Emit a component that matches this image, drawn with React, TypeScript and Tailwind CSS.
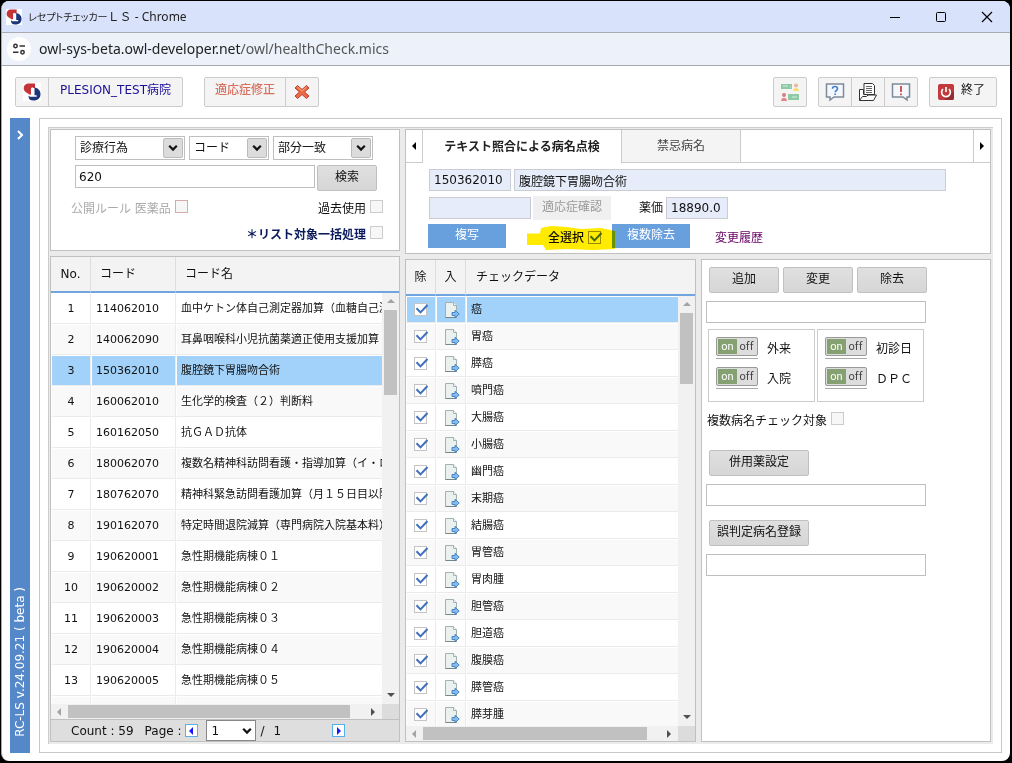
import type { ReactNode } from 'react';

type CodeRow = { no: number; code: string; name: string };

const codeRows: CodeRow[] = [
  { no: 1, code: '114062010', name: '血中ケトン体自己測定器加算（血糖自己測定器加算）' },
  { no: 2, code: '140062090', name: '耳鼻咽喉科小児抗菌薬適正使用支援加算' },
  { no: 3, code: '150362010', name: '腹腔鏡下胃腸吻合術' },
  { no: 4, code: '160062010', name: '生化学的検査（２）判断料' },
  { no: 5, code: '160162050', name: '抗ＧＡＤ抗体' },
  { no: 6, code: '180062070', name: '複数名精神科訪問看護・指導加算（イ・ロ以外）' },
  { no: 7, code: '180762070', name: '精神科緊急訪問看護加算（月１５日目以降）' },
  { no: 8, code: '190162070', name: '特定時間退院減算（専門病院入院基本料）' },
  { no: 9, code: '190620001', name: '急性期機能病棟０１' },
  { no: 10, code: '190620002', name: '急性期機能病棟０２' },
  { no: 11, code: '190620003', name: '急性期機能病棟０３' },
  { no: 12, code: '190620004', name: '急性期機能病棟０４' },
  { no: 13, code: '190620005', name: '急性期機能病棟０５' },
  { no: 14, code: '190620006', name: '急性期機能病棟０６' },
];

const diseases = [
  '癌', '胃癌', '膵癌', '噴門癌', '大腸癌', '小腸癌', '幽門癌', '末期癌',
  '結腸癌', '胃管癌', '胃肉腫', '胆管癌', '胆道癌', '腹膜癌', '膵管癌', '膵芽腫',
];

function Logo({ className }: { className: string }) {
  return (
    <svg className={className} viewBox="0 0 18 18" aria-hidden="true">
      <rect width="18" height="18" fill="#fff" />
      <path d="M4.500.5H12V5H8v6.500H6C5.500 10 1 9.500.7 5.500.600 3 2.200 1 4.500.5z" fill="#c43338" />
      <path d="M11.500 4.500c3.500.5 6 3 6 6.500 0 4-2.500 6.500-7 6.500-3.500 0-5-1.500-5-4.500h6z" fill="#1c3578" />
      <path d="M8.600 4.500h1.600v7.800h3.500v1.500H6.500v-1.300h2.100z" fill="#fff" />
    </svg>
  );
}

function Arrow({ dir, color }: { dir: 'up' | 'down' | 'left' | 'right'; color: string }) {
  const paths = { up: 'M1 6l4-4 4 4z', down: 'M1 3l4 4 4-4z', left: 'M7 1L3 5l4 4z', right: 'M3 1l4 4-4 4z' };
  return (
    <svg className="h-[10px] w-[10px] shrink-0" viewBox="0 0 10 10" aria-hidden="true">
      <path d={paths[dir]} fill={color} />
    </svg>
  );
}

function Chevron() {
  return (
    <svg className="h-2 w-[10px]" viewBox="0 0 10 8" aria-hidden="true">
      <path d="M1.200 1.800L5 5.600l3.800-3.800" fill="none" stroke="#111" strokeWidth="2.200" />
    </svg>
  );
}

function SearchSelect({ label, value, width }: { label: string; value: string; width: string }) {
  return (
    <span className={`relative ${width}`}>
      <select aria-label={label} className="h-6 w-full appearance-none border border-[#bfbfbf] bg-white pl-1 text-xs">
        <option>{value}</option>
      </select>
      <span className="pointer-events-none absolute top-[2px] right-[2px] flex h-5 w-5 items-center justify-center rounded-xs border border-[#bbb] bg-[#dcdcdc]">
        <Chevron />
      </span>
    </span>
  );
}

function GrayButton({ children, width }: { children: ReactNode; width: string }) {
  return (
    <button className={`h-[26px] rounded-xs border border-[#c0c0c0] bg-linear-to-b from-[#e0e0e0] to-[#d6d6d6] pb-[2px] text-xs ${width}`}>
      {children}
    </button>
  );
}

function EmptyCheck({ id, border = 'border-[#ccc]' }: { id: string; border?: string }) {
  return <input id={id} type="checkbox" className={`h-[13px] w-[13px] appearance-none border bg-[#f7f7f7] ${border}`} />;
}

function Check({ id, label, color = '#3f6fbd', box = 'border-[#c4c4c4] bg-white' }: { id?: string; label?: string; color?: string; box?: string }) {
  return (
    <span className="grid h-[13px] w-[13px]">
      <input id={id} aria-label={label} type="checkbox" defaultChecked className={`col-start-1 row-start-1 h-[13px] w-[13px] appearance-none border ${box}`} />
      <svg className="pointer-events-none col-start-1 row-start-1 h-[13px] w-[14px]" viewBox="0 0 14 13" aria-hidden="true">
        <path d="M2.500 5.200l4 4.200L13.500 2" fill="none" stroke={color} strokeWidth="2" />
      </svg>
    </span>
  );
}

function Toggle({ label }: { label: string }) {
  return (
    <label className="flex h-[30px] items-start gap-[9px]">
      <input type="checkbox" className="sr-only" defaultChecked />
      <span className="flex h-[22px] w-[42px] shrink-0 border-b border-[#aaa]">
        <span className="flex h-[19px] w-full rounded-xs border border-[#999] bg-[#ddd] p-px font-['Roboto',sans-serif] text-[11px] leading-[15px]">
          <span className="w-[19px] bg-[#86a171] text-center text-white">on</span>
          <span className="flex-1 text-center text-[#444]">off</span>
        </span>
      </span>
      <span className="pt-[3px] leading-[18px]">{label}</span>
    </label>
  );
}

function ExportDoc() {
  return (
    <svg className="h-4 w-4" viewBox="0 0 16 16" aria-hidden="true">
      <path d="M1.500.5h8l3 3v12h-11z" fill="#eaf1ef" stroke="#9fb1b0" />
      <path d="M1.500 15.500h11" stroke="#71878a" />
      <path d="M9.500.5v3h3" fill="#fff" stroke="#9fb1b0" />
      <path d="M8 10.500h3V8.300l4.200 3.700L11 15.700v-2.200H8z" fill="#86bdf0" stroke="#3d7cc0" strokeWidth=".9" />
    </svg>
  );
}

function VScroll({ thumb }: { thumb: string }) {
  return (
    <div className="flex w-[17px] shrink-0 flex-col items-center bg-[#f1f1f1] pt-1 pb-1">
      <Arrow dir="up" color="#a3a3a3" />
      <div className={`mt-[3px] w-[13px] bg-[#c1c1c1] ${thumb}`} />
      <div className="flex-1" />
      <Arrow dir="down" color="#505050" />
    </div>
  );
}

function HScroll({ thumb }: { thumb: string }) {
  return (
    <div className="flex h-[15px] shrink-0 items-center bg-[#f1f1f1] pl-[3px]">
      <Arrow dir="left" color="#a3a3a3" />
      <div className={`ml-[4px] h-[13px] bg-[#c1c1c1] ${thumb}`} />
      <div className="flex-1" />
      <Arrow dir="right" color="#505050" />
      <div className="ml-1 h-full w-[17px] bg-[#dcdcdc]" />
    </div>
  );
}

function TitleBar() {
  return (
    <header className="shrink-0 font-['Noto_Sans','Noto_Sans_CJK_JP',sans-serif]">
      <div className="flex h-8 items-center border-b border-[#a9abb0] bg-[#d8e2fb] pl-1 text-[#222]">
        <Logo className="h-4 w-4" />
        <h1 className="ml-[6px] flex-1 text-xs">
          <span className="text-[10px] [font-feature-settings:'palt']">レセプトチェッカー</span>ＬＳ - Chrome
        </h1>
        <button aria-label="最小化" className="flex w-[46px] justify-center">
          <svg className="h-3 w-3" viewBox="0 0 12 12"><path d="M1 6.500h10" stroke="#000" /></svg>
        </button>
        <button aria-label="最大化" className="flex w-[46px] justify-center">
          <svg className="h-3 w-3" viewBox="0 0 12 12"><rect x="1.500" y="1.500" width="9" height="9" rx="1" fill="none" stroke="#000" /></svg>
        </button>
        <button aria-label="閉じる" className="flex w-[46px] justify-center">
          <svg className="h-3 w-3" viewBox="0 0 12 12"><path d="M1 1l10 10M11 1L1 11" stroke="#000" strokeWidth="1.200" /></svg>
        </button>
      </div>
      <div className="flex h-[33px] items-center border-b border-[#a9abb0] bg-[#edf1fa] pl-[5px]">
        <span className="flex h-6 w-6 items-center justify-center rounded-full bg-white">
          <svg className="h-3 w-3" viewBox="0 0 12 12" fill="none" stroke="#333" strokeWidth="1.500">
            <circle cx="2.500" cy="3" r="1.700" />
            <path d="M6.500 3H12M0 9.200h5.500" />
            <circle cx="9.500" cy="9.200" r="1.700" />
          </svg>
        </span>
        <span className="ml-2 text-sm text-[#555]">
          <span className="text-[#222]">owl-sys-beta.owl-developer.net</span>/owl/healthCheck.mics
        </span>
      </div>
    </header>
  );
}

function Toolbar() {
  const group = 'flex h-[30px] rounded-xs border border-[#ccc] bg-[#f4f4f4]';
  return (
    <nav className="flex shrink-0 px-[13px] pt-[11px] pb-[11px]">
      <div className={group}>
        <button aria-label="ホーム" className="flex w-[33px] items-center justify-center border-r border-[#ccc]">
          <Logo className="h-[18px] w-[18px]" />
        </button>
        <button className="w-[133px] pb-1 text-[#1a0f99]">PLESION_TEST病院</button>
      </div>
      <div className={`ml-[21px] ${group}`}>
        <button className="w-[81px] border-r border-[#ccc] pb-1 font-medium text-[#d9705f]">適応症修正</button>
        <button aria-label="取消" className="flex w-8 items-center justify-center">
          <svg className="h-4 w-4" viewBox="0 0 16 16">
            <path d="M3.500 1.500L8 5.500l4.500-4 2.500 2.500L10.500 8l4.500 4-2.500 2.500-4.500-4-4.500 4L1 12l4.500-4L1 4z" fill="#ec6a45" stroke="#b9402a" />
            <path d="M3.500 3L8 7l4.500-4" fill="none" stroke="#f7a88a" />
          </svg>
        </button>
      </div>
      <div className="flex-1" />
      <div className={group}>
        <button aria-label="チャット" className="flex w-8 items-center justify-center">
          <svg className="h-5 w-5" viewBox="0 0 20 20">
            <path d="M1 2h11v5H1zM8 12h11v6H8z" fill="#8fcaa7" />
            <path d="M3 4h5M10 5h1M12 15h5" stroke="#d6ecdd" />
            <circle cx="16" cy="3.500" r="2" fill="#edb79c" />
            <path d="M13 9c0-4 6-4 6 0z" fill="#f3df74" />
            <circle cx="4" cy="13" r="2" fill="#cf8080" />
            <path d="M1 19c0-4.500 6-4.500 6 0z" fill="#e5868a" />
          </svg>
        </button>
      </div>
      <div className={`ml-[11px] ${group}`}>
        <button aria-label="ヘルプ" className="flex w-[33px] items-center justify-center border-r border-[#ccc]">
          <svg className="h-5 w-5" viewBox="0 0 20 20">
            <path d="M1.500 2h17v13H9l-4 3v-3H1.500z" fill="#f4f8fc" stroke="#7e8a98" strokeWidth="1.500" />
            <path d="M7.500 6.800c0-3 5-3 5 0 0 1.700-2.300 1.700-2.300 3.400M10.200 11.500v1.600" fill="none" stroke="#3d7fd0" strokeWidth="1.600" />
          </svg>
        </button>
        <button aria-label="ファイル" className="flex w-[33px] items-center justify-center border-r border-[#ccc]">
          <svg className="h-5 w-5" viewBox="0 0 20 20" fill="#fff" stroke="#333">
            <path d="M1.500 18.500v-11h4v5" />
            <path d="M6 12.500v-11h8.500l2 2v9z" />
            <path d="M8 4.500h6M8 6.500h6M8 8.500h6M8 10.500h6" stroke="#666" />
            <path d="M1.500 18.500l3-4h4l1.500-1.500h8.500l-3 5.500z" />
          </svg>
        </button>
        <button aria-label="お知らせ" className="flex w-8 items-center justify-center">
          <svg className="h-5 w-5" viewBox="0 0 20 20">
            <path d="M1.500 2h17v13H16v3l-4-3H1.500z" fill="#f4f8fc" stroke="#7e8a98" strokeWidth="1.500" />
            <path d="M10 4v6M10 11.500v1.800" stroke="#cf4540" strokeWidth="1.800" />
          </svg>
        </button>
      </div>
      <button className={`ml-[11px] w-[68px] items-center justify-center gap-[6px] pr-1 ${group}`}>
        <svg className="h-[18px] w-[18px]" viewBox="0 0 18 18" fill="none">
          <rect x="1" y="1" width="16" height="16" rx="2" fill="#c23a3b" />
          <path d="M12.500 5.500L17 10v5a2 2 0 0 1-2 2H9l-4-4z" fill="#942c30" />
          <circle cx="9" cy="9.300" r="5" fill="#c23a3b" />
          <path d="M6 6a4.400 4.400 0 1 0 6 0M9 4v5" stroke="#fff" strokeWidth="1.700" />
        </svg>
        <span className="pb-1">終了</span>
      </button>
    </nav>
  );
}

function SearchPanel() {
  return (
    <form className="h-[122px] shrink-0 border border-[#c0c0c0] bg-white pt-[6px] pr-4 pl-6" onSubmit={(e) => e.preventDefault()}>
      <div className="flex gap-1">
        <SearchSelect label="区分" value="診療行為" width="w-[110px]" />
        <SearchSelect label="検索項目" value="コード" width="w-[80px]" />
        <SearchSelect label="一致条件" value="部分一致" width="w-[100px]" />
      </div>
      <div className="mt-[5px] flex items-start gap-[2px]">
        <input aria-label="検索語" defaultValue="620" className="h-[23px] w-60 border border-[#bfbfbf] px-[3px]" />
        <GrayButton width="w-[60px]">検索</GrayButton>
      </div>
      <div className="mt-[9px] flex h-[18px] justify-between">
        <span className="-ml-1 flex gap-1 text-[#aaa]">
          <label htmlFor="open-rule" className="leading-[18px]">公開ルール 医薬品</label>
          <EmptyCheck id="open-rule" border="border-[#d8aaa8]" />
        </span>
        <span className="flex gap-1">
          <label htmlFor="past-use" className="leading-[18px]">過去使用</label>
          <EmptyCheck id="past-use" />
        </span>
      </div>
      <div className="mt-2 flex justify-end gap-1">
        <label htmlFor="bulk" className="leading-[18px] font-bold text-[#0b1a5c]">＊リスト対象一括処理</label>
        <EmptyCheck id="bulk" />
      </div>
    </form>
  );
}

function CodeGrid() {
  return (
    <section className="flex min-h-0 flex-1 flex-col border border-[#c0c0c0] bg-white">
      <div className="flex min-h-0 flex-1">
        <div className="relative min-w-0 flex-1 overflow-hidden">
          <table className="w-full table-fixed border-separate border-spacing-0">
            <thead>
              <tr className="h-9 bg-[#f3f3f3] text-left">
                <th className="w-10 border-r border-b-2 border-r-[#ddd] border-b-[#70a5e0] text-center font-normal">No.</th>
                <th className="w-[85px] border-r border-b-2 border-r-[#ddd] border-b-[#70a5e0] pl-[9px] font-normal">コード</th>
                <th className="border-b-2 border-b-[#70a5e0] pl-[9px] font-normal">コード名</th>
              </tr>
            </thead>
            <tbody className="text-[11px]">
              {codeRows.map((row, i) => {
                const bg = row.no === 3 ? 'bg-[#a2d2f9]' : i % 2 ? 'bg-[#f9f9f9]' : 'bg-white';
                const cell = `h-[31px] border-y border-l border-t-white border-r-[#ebebeb] border-b-[#ebebeb] border-l-white pt-[2px] pb-0 ${bg}`;
                return (
                  <tr key={row.no}>
                    <td className={`${cell} border-r text-center`}>{row.no}</td>
                    <td className={`${cell} border-r pl-1`}>{row.code}</td>
                    <td className={`${cell} overflow-hidden pl-1 whitespace-nowrap`}>{row.name}</td>
                  </tr>
                );
              })}
            </tbody>
          </table>
        </div>
        <div className="flex w-[17px] shrink-0 flex-col">
          <div className="h-9 shrink-0 border-b-2 border-[#70a5e0] bg-[#f3f3f3]" />
          <div className="flex min-h-0 flex-1">
            <VScroll thumb="h-[85px]" />
          </div>
        </div>
      </div>
      <HScroll thumb="w-[282px]" />
      <div className="flex h-[22px] shrink-0 items-center border-t border-[#c0c0c0] bg-[#dedede] pl-5">
        <span>Count : 59</span>
        <span className="ml-[11px]">Page :</span>
        <button aria-label="前のページ" className="ml-[3px] flex h-[13px] w-[13px] items-center justify-center border border-[#58b0e8] bg-white">
          <Arrow dir="left" color="#1a1aff" />
        </button>
        <span className="relative ml-2 w-[50px]">
          <select aria-label="ページ" className="h-[21px] w-full appearance-none border border-[#888] bg-white pl-[5px]">
            <option>1</option>
          </select>
          <span className="pointer-events-none absolute top-[7px] right-1">
            <Chevron />
          </span>
        </span>
        <span className="ml-[5px]">/</span>
        <span className="ml-[9px]">1</span>
        <button aria-label="次のページ" className="ml-[51px] flex h-[13px] w-[13px] items-center justify-center border border-[#58b0e8] bg-white">
          <Arrow dir="right" color="#1a1aff" />
        </button>
      </div>
    </section>
  );
}

function DetailPanel() {
  const field = 'h-[22px] border border-[#c9ccd3] bg-[#e6ecf9] px-1 text-xs';
  const blue = 'h-6 w-[78px] bg-[#68a0de] pb-[3px] text-white';
  return (
    <section className="h-[125px] shrink-0 border border-[#c0c0c0] bg-white">
      <div className="flex h-[33px]" role="tablist">
        <button aria-label="前のタブ" className="flex w-[17px] items-center justify-center border-r border-b border-[#ccc]">
          <Arrow dir="left" color="#000" />
        </button>
        <button role="tab" aria-selected="true" className="w-[198px] font-bold text-[#222]">テキスト照合による病名点検</button>
        <button role="tab" aria-selected="false" className="w-[120px] border-x border-b border-[#ccc] bg-[#f4f4f4] text-[#444]">禁忌病名</button>
        <div className="flex-1 border-b border-[#ccc]" />
        <button aria-label="次のタブ" className="flex w-[17px] items-center justify-center border-b border-l border-[#ccc]">
          <Arrow dir="right" color="#000" />
        </button>
      </div>
      <div className="mt-[6px] flex gap-[3px] pr-11 pl-[23px]">
        <input aria-label="コード" readOnly defaultValue="150362010" className={`w-[82px] shrink-0 ${field}`} />
        <input aria-label="コード名" readOnly defaultValue="腹腔鏡下胃腸吻合術" className={`min-w-0 flex-1 ${field}`} />
      </div>
      <div className="mt-[5px] flex items-center pl-[23px]">
        <input aria-label="適応症" readOnly className={`w-[102px] ${field}`} />
        <button disabled className="ml-[2px] h-6 w-[78px] bg-[#f0f0f0] pb-[2px] text-[#999]">適応症確認</button>
        <label htmlFor="price" className="ml-7">薬価</label>
        <input id="price" readOnly defaultValue="18890.0" className={`ml-[3px] w-[62px] ${field}`} />
      </div>
      <div className="mt-1 flex items-center pl-[22px]">
        <button className={blue}>複写</button>
        <div className="relative flex w-[106px] items-center gap-1 pt-[3px] pl-[42px]">
          <label htmlFor="all" className="font-medium">全選択</label>
          <Check id="all" color="#4472b8" box="border-[#999] bg-white" />
          <svg className="pointer-events-none absolute -top-[2px] left-[21px] h-[26px] w-[88px] mix-blend-multiply" viewBox="0 0 88 26" aria-hidden="true">
            <path d="M0 8.500h13L14 3 24 1l16 1 14 2 20-1 14 3v18l-22 1-26-1-21 1-3-5H0z" fill="#ffea00" />
          </svg>
        </div>
        <button className={blue}>複数除去</button>
        <a href="#history" className="ml-[25px] pt-[3px] text-[#660066]">変更履歴</a>
      </div>
    </section>
  );
}

function CheckGrid() {
  return (
    <section className="flex min-h-0 w-[291px] shrink-0 flex-col border border-[#c0c0c0] bg-white">
      <div className="flex min-h-0 flex-1">
        <div className="relative min-w-0 flex-1 overflow-hidden">
          <table className="w-full table-fixed border-separate border-spacing-0">
            <thead>
              <tr className="h-9 bg-[#f3f3f3] text-left">
                <th className="w-[30px] border-r border-b-2 border-r-[#ddd] border-b-[#70a5e0] text-center font-normal">除</th>
                <th className="w-[30px] border-r border-b-2 border-r-[#ddd] border-b-[#70a5e0] text-center font-normal">入</th>
                <th className="border-b-2 border-b-[#70a5e0] pl-[10px] font-normal">チェックデータ</th>
              </tr>
            </thead>
            <tbody className="text-[11px]">
              {diseases.map((name, i) => {
                const bg = i === 0 ? 'bg-[#a2d2f9]' : i % 2 ? 'bg-[#f9f9f9]' : 'bg-white';
                const cell = `h-[27px] border-y border-l border-t-white border-r-[#ebebeb] border-b-[#ebebeb] border-l-white pb-0 ${bg}`;
                return (
                  <tr key={name}>
                    <td className={`${cell} border-r`}>
                      <div className="flex pl-[7px]"><Check label={`${name}を除く`} /></div>
                    </td>
                    <td className={`${cell} border-r`}>
                      <button aria-label={`${name}を入力`} className="ml-[7px] flex"><ExportDoc /></button>
                    </td>
                    <td className={`${cell} pt-[2px] pl-1`}>{name}</td>
                  </tr>
                );
              })}
            </tbody>
          </table>
        </div>
        <div className="flex w-[17px] shrink-0 flex-col">
          <div className="h-9 shrink-0 border-b-2 border-[#70a5e0] bg-[#f3f3f3]" />
          <div className="flex min-h-0 flex-1">
            <VScroll thumb="h-[71px]" />
          </div>
        </div>
      </div>
      <HScroll thumb="w-[224px]" />
    </section>
  );
}

function EditPanel() {
  const input = 'mt-2 h-[22px] w-[220px] border border-[#bfbfbf] px-1';
  const box = 'h-[73px] w-[107px] border border-[#ccc] pt-[7px] pl-[7px]';
  return (
    <section className="flex min-w-0 flex-1 flex-col items-start border border-[#c0c0c0] bg-white pt-[7px] pl-1">
      <div className="flex gap-1 pl-[3px]">
        <GrayButton width="w-[70px]">追加</GrayButton>
        <GrayButton width="w-[70px]">変更</GrayButton>
        <GrayButton width="w-[70px]">除去</GrayButton>
      </div>
      <input aria-label="病名" className={input} />
      <div className="mt-[6px] flex gap-[2px] pl-[2px]">
        <div className={box}>
          <Toggle label="外来" />
          <Toggle label="入院" />
        </div>
        <div className={box}>
          <Toggle label="初診日" />
          <Toggle label="ＤＰＣ" />
        </div>
      </div>
      <div className="mt-[10px] flex gap-1 pl-px">
        <label htmlFor="multi" className="leading-[18px]">複数病名チェック対象</label>
        <EmptyCheck id="multi" />
      </div>
      <div className="mt-5 pl-[3px]">
        <GrayButton width="w-[100px]">併用薬設定</GrayButton>
      </div>
      <input aria-label="併用薬" className={input} />
      <div className="mt-[14px] pl-[3px]">
        <GrayButton width="w-[100px]">誤判定病名登録</GrayButton>
      </div>
      <input aria-label="誤判定病名" className={input} />
    </section>
  );
}

export default function App() {
  return (
    <div className="h-screen bg-black pt-px pr-[2px] pb-[2px] pl-px font-['DejaVu_Sans','Noto_Sans_CJK_JP',sans-serif] text-xs text-[#111]">
      <div className="flex h-full flex-col overflow-hidden rounded-lg border-l border-[#aaa] bg-white">
        <TitleBar />
        <Toolbar />
        <div className="flex min-h-0 flex-1 pr-2 pb-2 pl-2">
          <aside className="flex w-5 shrink-0 flex-col items-center justify-between bg-[#5588c9] pt-3 pb-4 text-white">
            <button aria-label="メニューを開く">
              <svg className="h-[10px] w-[10px]" viewBox="0 0 10 10">
                <path d="M3 1l4 4-4 4" fill="none" stroke="#fff" strokeWidth="2" />
              </svg>
            </button>
            <span className="rotate-180 leading-5 whitespace-nowrap [writing-mode:vertical-rl]">RC-LS v.24.09.21 ( beta )</span>
          </aside>
          <main className="ml-[9px] flex min-w-0 flex-1 border border-[#c8c8c8] p-2">
            <div className="flex min-w-0 flex-1 gap-[5px] border-t border-l border-[#ccc] bg-[#ebebeb] pt-px pr-[2px] pb-[2px] pl-px">
              <div className="flex w-[350px] shrink-0 flex-col gap-[5px]">
                <SearchPanel />
                <CodeGrid />
              </div>
              <div className="flex min-w-0 flex-1 flex-col gap-[5px]">
                <DetailPanel />
                <div className="flex min-h-0 flex-1 gap-[5px]">
                  <CheckGrid />
                  <EditPanel />
                </div>
              </div>
            </div>
          </main>
        </div>
      </div>
    </div>
  );
}
